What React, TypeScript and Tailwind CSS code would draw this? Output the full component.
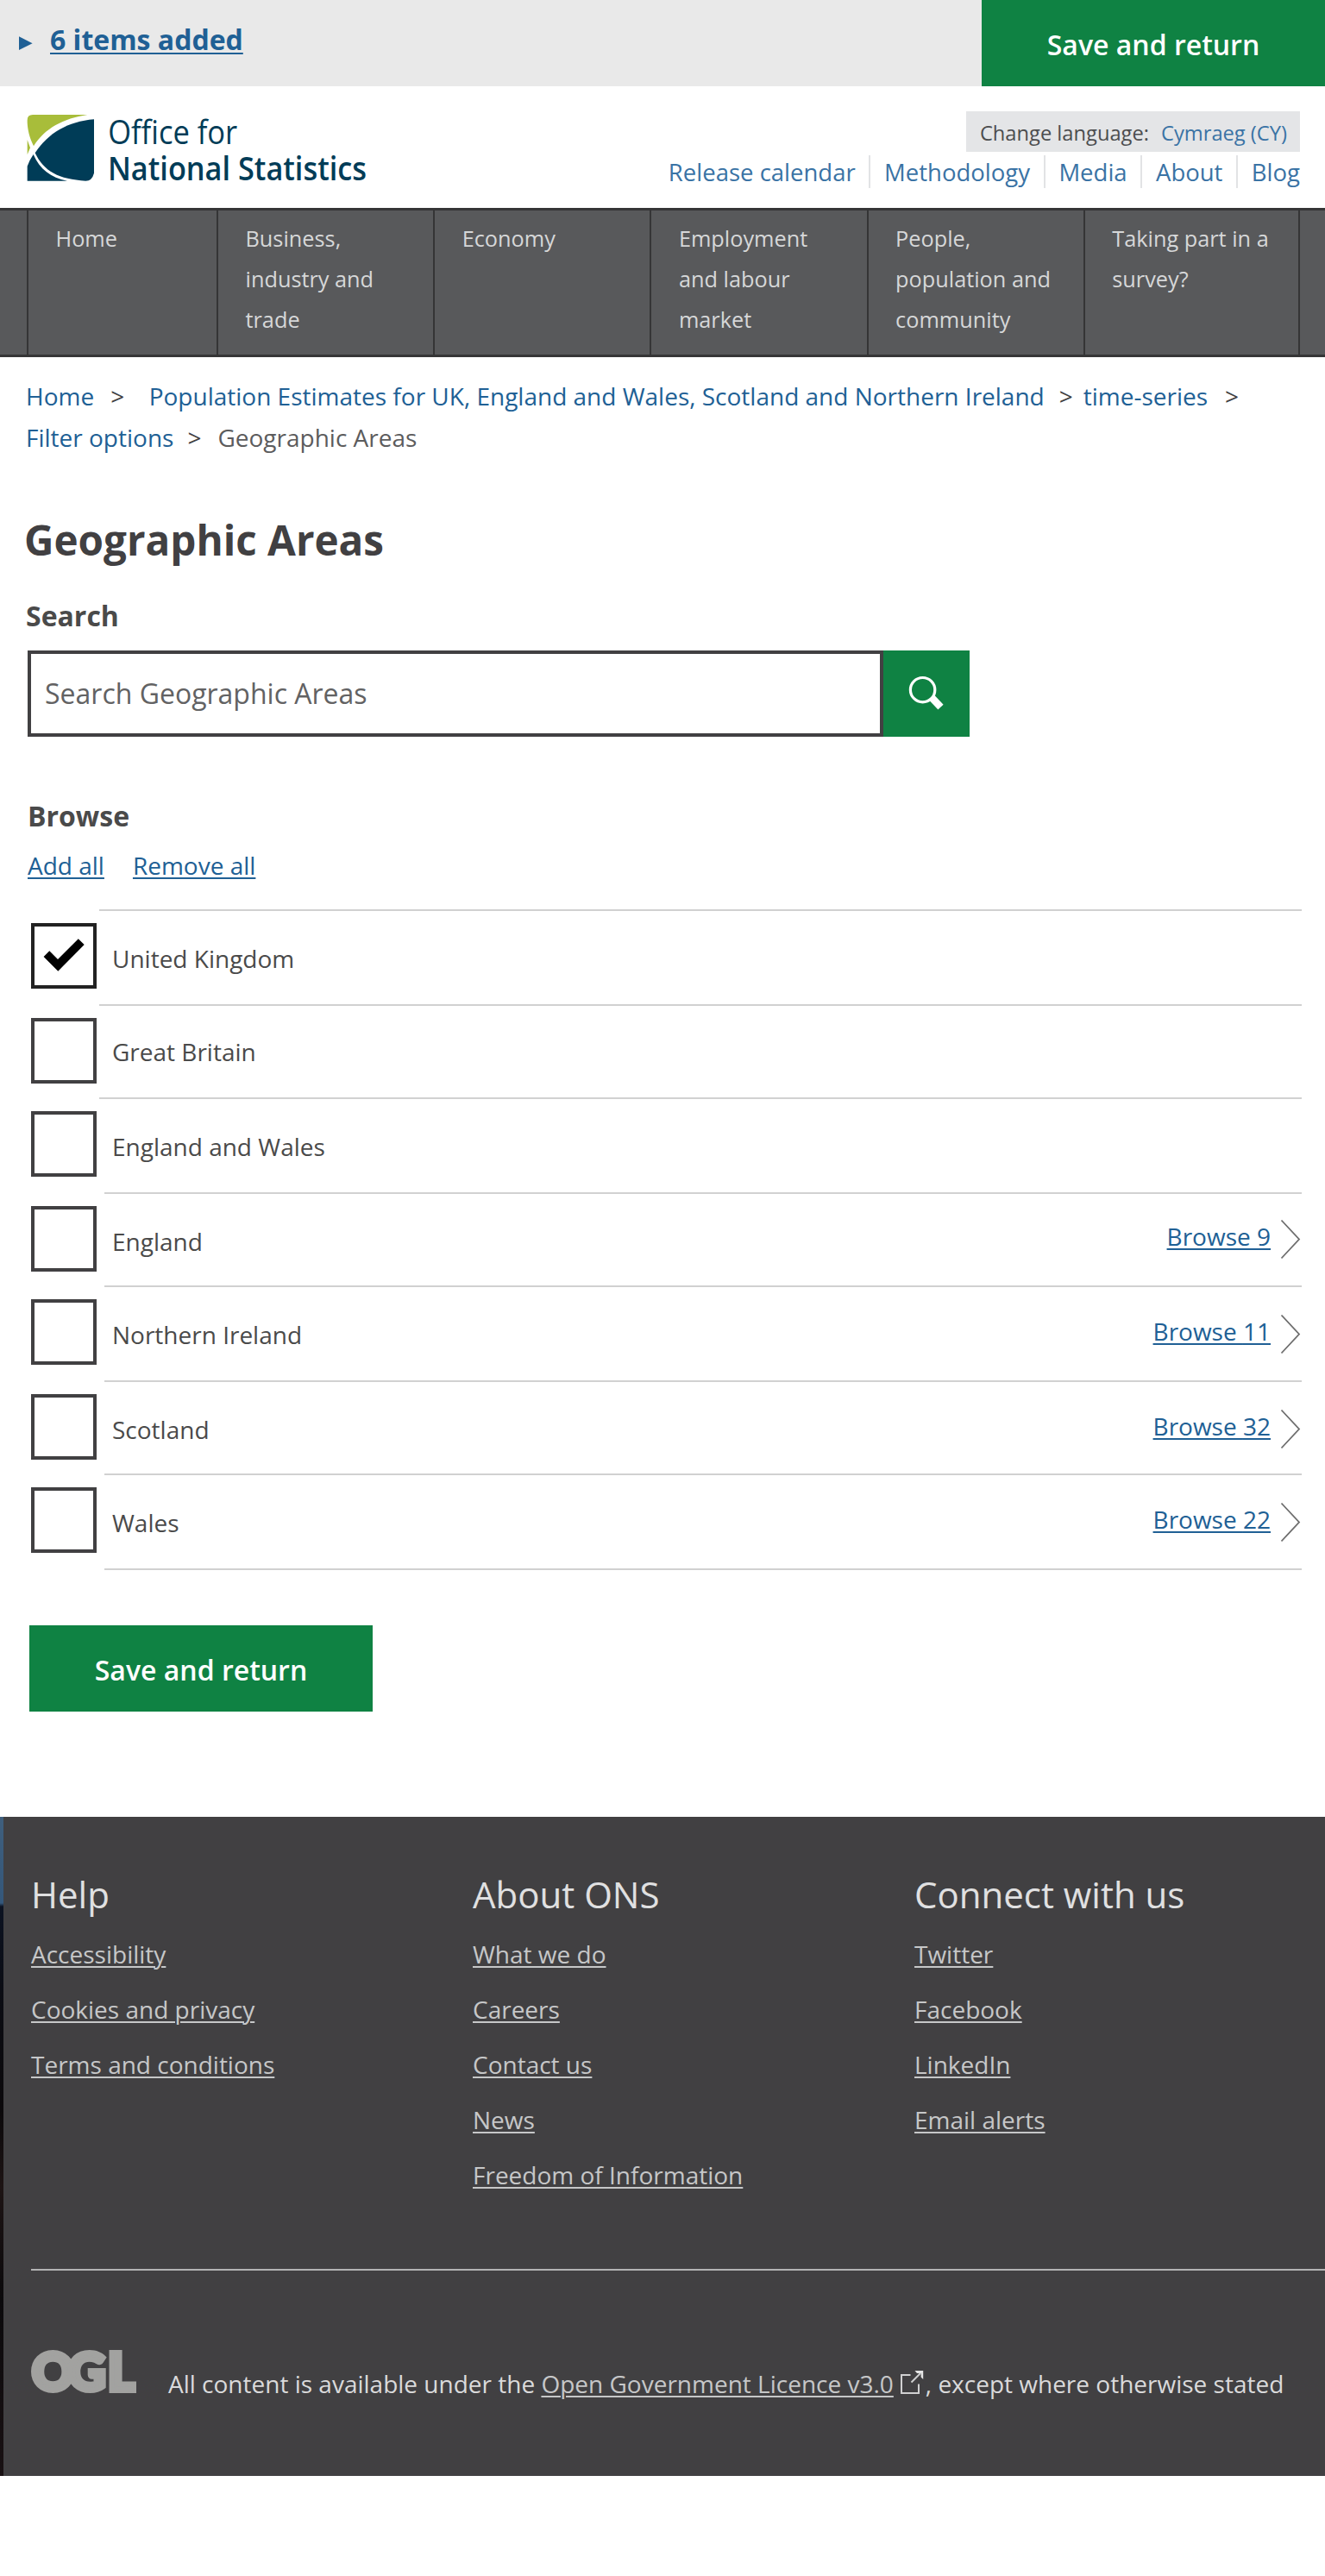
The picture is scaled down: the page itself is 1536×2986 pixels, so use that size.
const UTILITY_LINKS = ["Release calendar", "Methodology", "Media", "About", "Blog"];

const NAV_ITEMS = [
  "Home",
  "Business, industry and trade",
  "Economy",
  "Employment and labour market",
  "People, population and community",
  "Taking part in a survey?",
];

type Area = {
  name: string;
  checked?: boolean;
  browse?: number;
  row: string;
  rule: string;
  label: string;
  link?: string;
};

const AREAS: Area[] = [
  { name: "United Kingdom", checked: true, row: "h-[110px]", rule: "ml-[115px]", label: "pt-[31px]" },
  { name: "Great Britain", row: "h-[108px]", rule: "ml-[115px]", label: "pt-[29px]" },
  { name: "England and Wales", row: "h-[110px]", rule: "ml-[115px]", label: "pt-[31px]" },
  { name: "England", browse: 9, row: "h-[108px]", rule: "ml-[121px]", label: "pt-[31px]", link: "pt-[25px]" },
  { name: "Northern Ireland", browse: 11, row: "h-[110px]", rule: "ml-[121px]", label: "pt-[31px]", link: "pt-[27px]" },
  { name: "Scotland", browse: 32, row: "h-[108px]", rule: "ml-[121px]", label: "pt-[31px]", link: "pt-[27px]" },
  { name: "Wales", browse: 22, row: "h-[110px]", rule: "ml-[121px]", label: "pt-[31px]", link: "pt-[27px]" },
];

const FOOTER_COLUMNS = [
  { title: "Help", links: ["Accessibility", "Cookies and privacy", "Terms and conditions"] },
  { title: "About ONS", links: ["What we do", "Careers", "Contact us", "News", "Freedom of Information"] },
  { title: "Connect with us", links: ["Twitter", "Facebook", "LinkedIn", "Email alerts"] },
];

function Logo() {
  return (
    <svg width="450" height="141" viewBox="0 100 450 141" role="img" aria-label="Office for National Statistics">
      <g transform="translate(0 110) scale(0.33333)">
        <path d="M114 69H304C220 82 156 116 117 178C102 148 96 120 95 96V88Q95 69 114 69Z" fill="#a8bd3a" />
        <path d="M95 156L105 184L95 208Z" fill="#a8bd3a" />
        <path d="M327 85V272Q320 299 298 299C205 294 152 266 122 202C168 132 236 93 327 85Z" fill="#003c57" />
        <path d="M95 248Q103 226 116 207C138 258 176 288 234 299H95Z" fill="#003c57" />
      </g>
      <g fill="#003c57" fontFamily="'Open Sans', sans-serif">
        <text x="125.2" y="166.5" fontSize="37.5" textLength="150" lengthAdjust="spacingAndGlyphs">Office for</text>
        <text x="125" y="208.5" fontSize="37.5" fontWeight="600" textLength="300" lengthAdjust="spacingAndGlyphs">National Statistics</text>
      </g>
    </svg>
  );
}

function SaveButton({ className }: { className: string }) {
  return (
    <button className={`h-[100px] bg-[#0f8243] pt-[3px] text-center text-[32px] leading-[97px] font-semibold text-white ${className}`}>
      Save and return
    </button>
  );
}

function AreaRow({ area }: { area: Area }) {
  return (
    <li className={`flex flex-col ${area.row}`}>
      <div className={`h-[2px] shrink-0 bg-[#d1d1d1] ${area.rule}`} />
      <div className="flex items-start text-[28px] leading-[48px]">
        <span className={`mt-[14px] ml-9 flex size-[76px] shrink-0 border-4 bg-white ${area.checked ? "border-[#222222]" : "border-[#414042]"}`}>
          {area.checked && (
            <svg width="68" height="68" viewBox="40 1074 68 68" aria-hidden="true">
              <path d="M50.6 1109L57.3 1102.3L67 1112L90.8 1088.3L97.7 1095L67.3 1125.7Z" fill="#000" />
            </svg>
          )}
        </span>
        <span className={`ml-[18px] flex-1 text-[#4a4a4a] ${area.label}`}>{area.name}</span>
        {area.browse !== undefined && (
          <a className={`mr-px flex items-start ${area.link}`}>
            <span className="text-[#206095] underline decoration-2 underline-offset-[3px]">Browse {area.browse}</span>
            <svg className="mt-[4px] ml-[11px]" width="24" height="48" viewBox="0 0 24 48" fill="none" stroke="#6d6d6d" strokeWidth="1.8" aria-hidden="true">
              <path d="M1.5 1.5L22 23.5L1.5 45.5" />
            </svg>
          </a>
        )}
      </div>
    </li>
  );
}

export default function App() {
  return (
    <div className="w-[1536px] bg-white font-['Open_Sans',sans-serif] text-[#414042]">
      <div className="flex h-[100px] justify-between bg-[#e9e9e9]">
        <div className="flex pt-[22px] pl-[22px]">
          <svg className="mt-5 mr-[20px]" width="16" height="17" viewBox="0 0 16 17" aria-hidden="true">
            <path d="M0 0.3V16L15.6 8.2Z" fill="#206095" />
          </svg>
          <a className="text-[32px] leading-[48px] font-bold text-[#206095] underline decoration-2 underline-offset-[3px]">6 items added</a>
        </div>
        <SaveButton className="w-[398px]" />
      </div>

      <header className="flex h-[141px] justify-between">
        <Logo />
        <div className="flex flex-col items-end pt-[29px] pr-[29px]">
          <div className="flex h-[47px] gap-[14px] bg-[#e4e5e7] pt-[3px] pr-[15px] pl-4 text-[23.7px] leading-[45px]">
            <span className="text-[#4c4d4f]">Change language:</span>
            <a className="text-[#3a73a5]">Cymraeg (CY)</a>
          </div>
          <nav className="mt-1 flex h-[38px] text-[27.5px] leading-[39px] text-[#3a73a5]">
            {UTILITY_LINKS.map((link) => (
              <a key={link} className="border-r-2 border-[#e2e3e5] px-[15.7px] last:border-r-0 last:pr-0">
                {link}
              </a>
            ))}
          </nav>
        </div>
      </header>

      <nav className="h-[173px] border-y-[3px] border-[#353536] bg-[#58595b]">
        <ul className="ml-[31px] grid h-full w-[1476px] grid-cols-[220px_251.2px_251.2px_251.2px_251.2px_251px]">
          {NAV_ITEMS.map((item) => (
            <li key={item} className="border-l-2 border-[#353536] pt-[9px] pr-6 pl-[31.5px] text-[25.3px] leading-[47px] text-[#d6d7d8] last:border-r-2">
              {item}
            </li>
          ))}
        </ul>
      </nav>

      <main>
        <div className="pt-[21px] pl-[30px] text-[28px] leading-[48px]">
          <div className="flex">
            <a className="text-[#206095]">Home</a>
            <span className="ml-[19px]">&gt;</span>
            <a className="ml-[28.5px] text-[#206095]">Population Estimates for UK, England and Wales, Scotland and Northern Ireland</a>
            <span className="ml-[17px]">&gt;</span>
            <a className="ml-[12px] text-[#206095]">time-series</a>
            <span className="ml-[20px]">&gt;</span>
          </div>
          <div className="flex">
            <a className="text-[#206095]">Filter options</a>
            <span className="ml-[16px]">&gt;</span>
            <span className="ml-[19px] text-[#5c5c5d]">Geographic Areas</span>
          </div>
        </div>

        <h1 className="pt-[61px] pl-[28px] text-[47.6px] leading-[68px] font-bold">Geographic Areas</h1>

        <h2 className="mt-[30px] pl-[30px] text-[32px] leading-[48px] font-bold text-[#4a4a4a]">Search</h2>
        <div className="mt-[16px] ml-8 flex h-[100px]">
          <div className="w-[992px] border-4 border-[#414042] pl-4 text-[32px] leading-[92px] text-[#626263]">Search Geographic Areas</div>
          <button className="size-[100px] bg-[#0f8243]" aria-label="Search">
            <svg width="100" height="100" viewBox="1024 754 100 100">
              <circle cx="1069.6" cy="799.7" r="14.2" fill="none" stroke="#fff" strokeWidth="3.2" />
              <path d="M1083.4 806L1093.6 816.7L1087.4 822.6L1077.2 811.7Z" fill="#fff" />
            </svg>
          </button>
        </div>

        <h2 className="mt-[68px] pl-[32px] text-[32px] leading-[48px] font-bold text-[#4a4a4a]">Browse</h2>
        <div className="mt-[9px] flex gap-[33px] pl-[32px] text-[28px] leading-[48px] text-[#206095]">
          <a className="underline decoration-2 underline-offset-[3px]">Add all</a>
          <a className="underline decoration-2 underline-offset-[3px]">Remove all</a>
        </div>

        <ul className="mt-[27px] mr-[27px]">
          {AREAS.map((area) => (
            <AreaRow key={area.name} area={area} />
          ))}
        </ul>
        <div className="mr-[27px] ml-[121px] h-[2px] bg-[#d1d1d1]" />

        <SaveButton className="mt-16 ml-[34px] block w-[398px]" />
      </main>

      <footer className="mt-[122px] flex h-[764px] bg-[#414042]">
        <div className="w-1 bg-[linear-gradient(to_bottom,#3f5f7d_0px,#34577a_100px,#0c1322_104px,#0b0d14_200px,#0b090b_340px,#1d1414_430px,#0b0a0c_560px,#191113_764px)]" />
        <div className="flex-1 pt-[60px] pl-8">
          <div className="grid h-[464px] grid-cols-[512px_512px_1fr]">
            {FOOTER_COLUMNS.map((column) => (
              <section key={column.title}>
                <h3 className="text-[42px] leading-[60px] text-[#e0e0e1]">{column.title}</h3>
                <ul className="mt-[7px] text-[28px] leading-[64px] text-[#c6c7c8]">
                  {column.links.map((link) => (
                    <li key={link}>
                      <a className="underline decoration-2 underline-offset-[3px]">{link}</a>
                    </li>
                  ))}
                </ul>
              </section>
            ))}
          </div>
          <div className="h-[2px] bg-[#b3b3b4]" />
          <div className="flex pt-[90px]">
            <svg width="122" height="60" viewBox="0 0 122 60" role="img" aria-label="OGL">
              <text y="48.5" fontFamily="Lato, sans-serif" fontWeight="900" fontSize="60" fill="#a2a2a0" stroke="#a2a2a0" strokeWidth="6">
                <tspan x="1">O</tspan>
                <tspan x="43">G</tspan>
                <tspan x="89">L</tspan>
              </text>
            </svg>
            <p className="mt-[17px] ml-[37px] flex text-[28px] leading-[48px] text-[#dadadb]">
              <span className="whitespace-pre">All content is available under the </span>
              <a className="text-[#c6c7c8] underline decoration-2 underline-offset-[3px]">Open Government Licence v3.0</a>
              <svg className="mt-[7px] ml-[7px] mr-[2px]" width="28" height="30" viewBox="0 0 28 30" fill="none" stroke="#d0d0d1" strokeWidth="2" aria-hidden="true">
                <path d="M12.5 7H2V28H22V17.5" />
                <path d="M13.5 15.5L24 5" />
                <path d="M17.5 2H27.2V12L24.6 9.4V5H20Z" fill="#e4e4e4" stroke="none" />
              </svg>
              <span>, except where otherwise stated</span>
            </p>
          </div>
        </div>
      </footer>
      <div className="h-[116px]" />
    </div>
  );
}
